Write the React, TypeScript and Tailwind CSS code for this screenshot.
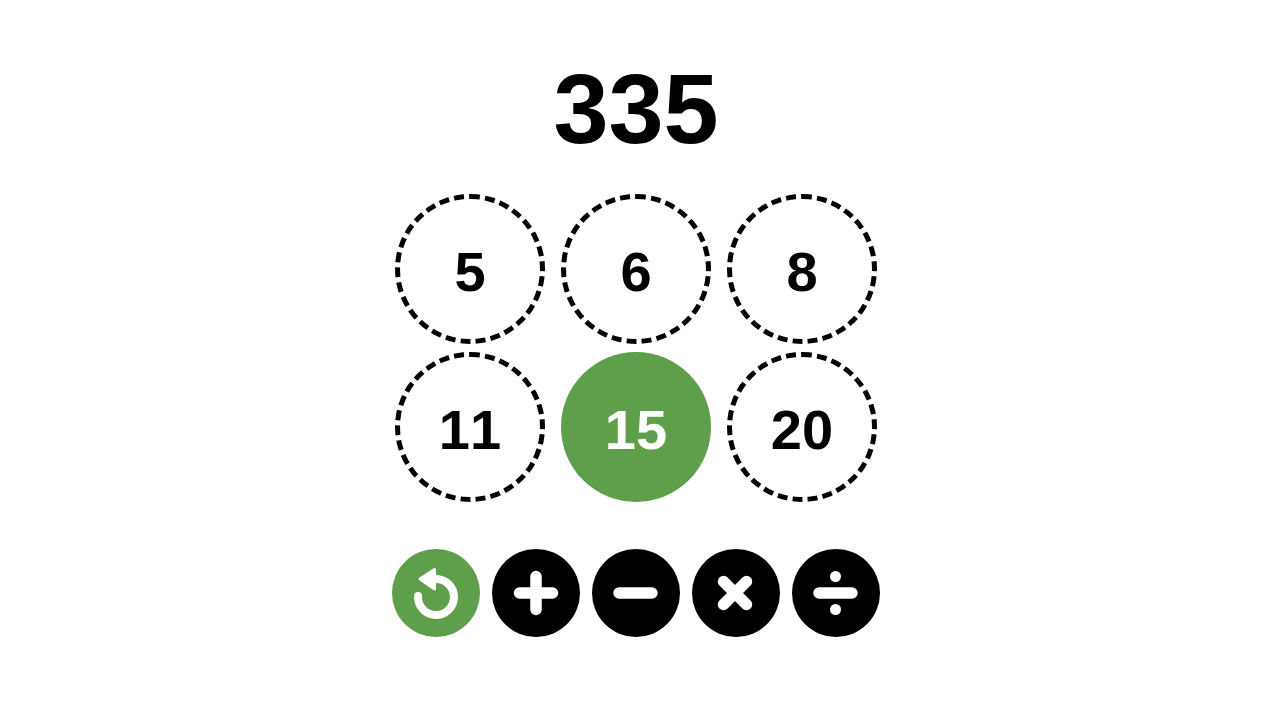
import { useState } from 'react';
import type { ReactNode } from 'react';
import { clsx } from 'clsx';

const TARGET = 335;
const NUMBERS = [5, 6, 8, 11, 15, 20];

const OPERATIONS: { label: string; icon: ReactNode }[] = [
  { label: 'Add', icon: <path d="M27.5 44H60.5M44 27.5V60.5" /> },
  { label: 'Subtract', icon: <path d="M27 44H60" /> },
  { label: 'Multiply', icon: <path d="M31.5 32.5L54.5 55.5M54.5 32.5L31.5 55.5" /> },
  {
    label: 'Divide',
    icon: (
      <>
        <path d="M27 44H60" />
        <circle cx="43.5" cy="27.5" r="5.5" fill="currentColor" stroke="none" />
        <circle cx="43.5" cy="60.5" r="5.5" fill="currentColor" stroke="none" />
      </>
    ),
  },
];

function RoundButton({
  label,
  className,
  onClick,
  children,
}: {
  label: string;
  className: string;
  onClick?: () => void;
  children: ReactNode;
}) {
  return (
    <button type="button" aria-label={label} onClick={onClick} className={clsx('size-22 rounded-full text-white', className)}>
      <svg viewBox="0 0 88 88" className="size-full" fill="none" stroke="currentColor" strokeWidth="11.5" strokeLinecap="round">
        {children}
      </svg>
    </button>
  );
}

export default function App() {
  const [selected, setSelected] = useState<number | null>(15);

  return (
    <main className="flex min-h-screen flex-col items-center bg-white pt-[49px] pr-2 font-['Liberation_Sans',Arial,sans-serif] text-black [font-kerning:none]">
      <h1 className="text-[99px] leading-[120px] font-bold">{TARGET}</h1>

      {/* Numbers */}
      <div className="mt-[25px] grid grid-cols-3 gap-x-4 gap-y-2">
        {NUMBERS.map((n) => (
          <button
            key={n}
            type="button"
            aria-pressed={n === selected}
            onClick={() => setSelected(n === selected ? null : n)}
            className={clsx(
              'flex size-[150px] items-center justify-center rounded-full pt-1.5 text-[56px] font-bold',
              n === selected ? 'bg-[#5f9e4a] text-white' : 'border-5 border-dashed border-black',
            )}
          >
            {n}
          </button>
        ))}
      </div>

      {/* Operations */}
      <div className="mt-[47px] flex gap-3">
        <RoundButton label="Undo" className="bg-[#5f9e4a]" onClick={() => setSelected(null)}>
          <path d="M26 47A18 18 0 1 0 44 30" strokeWidth="8" />
          <path d="M28 30L42.5 20.5V40Z" fill="currentColor" strokeWidth="3" strokeLinejoin="round" />
        </RoundButton>
        {OPERATIONS.map((op) => (
          <RoundButton key={op.label} label={op.label} className="bg-black">
            {op.icon}
          </RoundButton>
        ))}
      </div>
    </main>
  );
}
